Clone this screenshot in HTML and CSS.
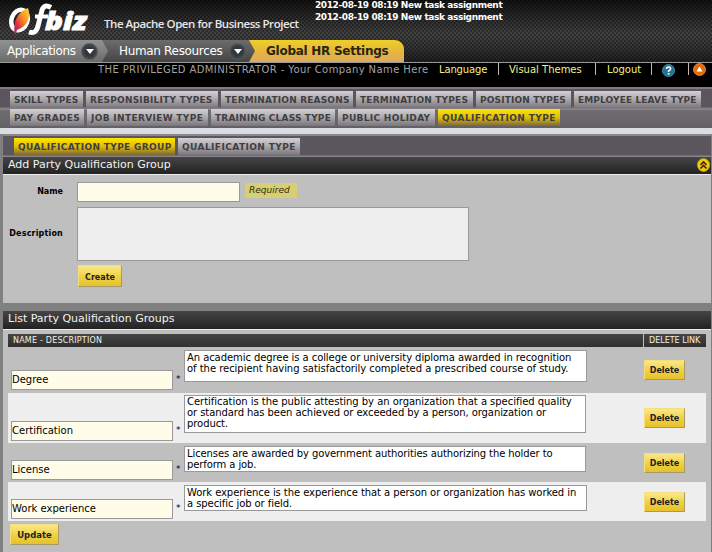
FILE: index.html
```html
<!DOCTYPE html>
<html lang="en">
<head>
<meta charset="utf-8">
<title>OFBiz: Global HR Settings</title>
<link rel="stylesheet" href="styles.css">
</head>
<body>
<header class="masthead">
  <div class="brand">
    <svg class="logo" width="84" height="38" viewBox="0 0 84 38">
      <defs><linearGradient id="feather" x1="1" y1="0" x2="0" y2="1"><stop offset="0" stop-color="#ffdc32"/><stop offset=".4" stop-color="#f88a24"/><stop offset=".7" stop-color="#dc3040"/><stop offset="1" stop-color="#8a2a80"/></linearGradient></defs>
      <ellipse cx="12.5" cy="20" rx="8" ry="10.5" transform="rotate(20 12.5 20)" fill="none" stroke="#fff" stroke-width="4.5"/>
      <path d="M8 36C6 25 8 13 21 8C24 17 21 26 10 30Z" fill="url(#feather)"/>
      <path d="M44 7.500C38 4 35.500 7 34.500 12L31 26Q29 34.500 22 32" fill="none" stroke="#fff" stroke-width="5"/>
      <path d="M28 16.500H41" stroke="#fff" stroke-width="4"/>
      <text class="logo-text" x="38" y="30" textLength="42" lengthAdjust="spacingAndGlyphs">biz</text>
    </svg>
    <span class="tagline">The Apache Open for Business Project</span>
    <div class="notices"><div>2012-08-19 08:19 New task assignment</div><div>2012-08-19 08:19 New task assignment</div></div>
  </div>
  <nav class="crumbs">
    <a class="crumb apps"><span>Applications</span><i class="drop"></i></a>
    <a class="crumb human"><span>Human Resources</span><i class="drop"></i></a>
    <a class="crumb current"><span>Global HR Settings</span></a>
  </nav>
</header>
<div class="userbar">
  <span class="who">THE PRIVILEGED ADMINISTRATOR - Your Company Name Here</span>
  <a class="lang">Language</a><a class="themes">Visual Themes</a><a class="logout">Logout</a>
  <span class="help"><svg width="13" height="13" viewBox="0 0 13 13"><circle cx="6.5" cy="6.5" r="6" fill="#247291" stroke="#468ca5"/><path d="M4.5 5Q4.6 3 6.6 3T8.6 4.8Q8.6 6 6.6 6.9V8" fill="none" stroke="#fff" stroke-width="1.6"/><path d="M5.8 9h1.7v1.6H5.8z" fill="#fff"/></svg></span>
  <span class="up"><svg width="13" height="13" viewBox="0 0 13 13"><circle cx="6.5" cy="6.5" r="6" fill="#e06c08" stroke="#d98238"/><path d="M6.5 3.5L9.5 8.5H3.5Z" fill="#fff"/></svg></span>
</div>
<nav class="tabs">
  <div class="tabrow first"><a class="t1">SKILL TYPES</a><a class="t2">RESPONSIBILITY TYPES</a><a class="t3">TERMINATION REASONS</a><a class="t4">TERMINATION TYPES</a><a class="t5">POSITION TYPES</a><a class="t6">EMPLOYEE LEAVE TYPE</a></div>
  <div class="tabrow second"><a class="t7">PAY GRADES</a><a class="t8">JOB INTERVIEW TYPE</a><a class="t9">TRAINING CLASS TYPE</a><a class="t10">PUBLIC HOLIDAY</a><a class="t11 on">QUALIFICATION TYPE</a></div>
</nav>
<main class="content">
  <div class="tabrow sub"><a class="t12 on">QUALIFICATION TYPE GROUP</a><a class="t13">QUALIFICATION TYPE</a></div>
  <section>
    <h2 class="title add"><span>Add Party Qualification Group</span>
      <svg width="13" height="14" viewBox="0 0 13 14"><ellipse cx="6.5" cy="7" rx="6.2" ry="6.5" fill="#f2c80e" stroke="#c69a18" stroke-width=".7"/><path d="M3.5 7L6.5 4L9.5 7M3.5 10.5L6.5 7.5L9.5 10.5" fill="none" stroke="#38270b" stroke-width="1.6"/></svg></h2>
    <form class="form">
      <label class="name">Name</label><div class="line"><div class="field short"></div><em class="required">Required</em></div>
      <label class="desc">Description</label><div class="area"></div>
      <span></span><a class="btn create">Create</a>
    </form>
  </section>
  <section class="list">
    <h2 class="title"><span>List Party Qualification Groups</span></h2>
    <div class="grid">
      <div class="head"><span class="h1">NAME - DESCRIPTION</span><span class="h2">DELETE LINK</span></div>
      <div class="row r1"><div class="field">Degree</div><b>*</b><div class="text"><p>An academic degree is a college or university diploma awarded in recognition</p><p class="l2">of the recipient having satisfactorily completed a prescribed course of study.</p></div><a class="btn">Delete</a></div>
      <div class="row r2 alt"><div class="field">Certification</div><b>*</b><div class="text"><p class="l2">Certification is the public attesting by an organization that a specified quality</p><p>or standard has been achieved or exceeded by a person, organization or</p><p>product.</p></div><a class="btn">Delete</a></div>
      <div class="row r3"><div class="field">License</div><b>*</b><div class="text"><p class="l5">Licenses are awarded by government authorities authorizing the holder to</p><p class="l5">perform a job.</p></div><a class="btn">Delete</a></div>
      <div class="row r4 alt"><div class="field">Work experience</div><b>*</b><div class="text"><p>Work experience is the experience that a person or organization has worked in</p><p>a specific job or field.</p></div><a class="btn">Delete</a></div>
    </div>
    <a class="btn update">Update</a>
  </section>
</main>
</body>
</html>
```
FILE: styles.css
```css
* { box-sizing: border-box; }
body { margin: 0; width: 712px; height: 552px; overflow: hidden; background: #808080; font-family: "DejaVu Sans", Verdana, sans-serif; font-size: 10px; color: #000; white-space: nowrap; }
h2, p { margin: 0; font-weight: normal; }

.masthead { height: 63px; border-bottom: 1px solid #999; background: radial-gradient(circle at 1px 1px, rgba(0,0,0,.3) 1px, transparent 1.3px) 0 0/4px 4px, radial-gradient(circle at 3px 3px, rgba(0,0,0,.3) 1px, transparent 1.3px) 0 0/4px 4px, linear-gradient(#111, #424242 34px, #363636 45px, #202020 62px); }
.brand { display: flex; height: 40px; }
.logo { margin-left: 7px; }
.logo-text { font: italic 800 24px "Open Sans", sans-serif; fill: #fff; stroke: #fff; stroke-width: .8px; }
.tagline { width: 196px; margin: 15px 0 0 13px; font: 600 11.5px/17px "Open Sans", sans-serif; color: #e8e8e8; letter-spacing: -.45px; }
.notices { margin: -1px 0 0 15px; font-weight: bold; font-size: 9px; line-height: 12px; color: #fff; letter-spacing: -.39px; }

.crumbs { display: flex; height: 22px; }
.crumb { display: flex; align-items: center; height: 22px; font-size: 12px; color: #fff; }
.apps { width: 108px; padding-left: 7px; justify-content: space-between; padding-right: 10px; background: linear-gradient(#929292, #6b6b6b); clip-path: polygon(0 0, 102px 0, 100% 50%, 102px 100%, 0 100%); z-index: 2; letter-spacing: -.4px; }
.human { width: 153px; margin-left: -6px; padding: 0 9px 0 17px; justify-content: space-between; background: linear-gradient(#6c6c6c, #444); clip-path: polygon(0 0, 147px 0, 100% 50%, 147px 100%, 0 100%); z-index: 1; letter-spacing: -.33px; }
.current { width: 156px; margin-left: -7px; padding-left: 18px; background: linear-gradient(#f0cf26, #e4b83c 50%, #dda95e); border-radius: 0 9px 0 0; color: #2a2410; font-weight: bold; font-size: 12px; letter-spacing: -.27px; }
.drop { width: 17px; height: 17px; border-radius: 50%; background: radial-gradient(#30353a 35%, #515961); border: 1px solid #555b60; display: flex; align-items: center; justify-content: center; }
.drop::before { content: ""; border: 4px solid transparent; border-top: 5px solid #fff; border-bottom: 0; }

.userbar { display: flex; height: 24px; background: #000; line-height: 13px; font-size: 10px; }
.who { width: 331px; margin-left: 98px; color: #a3a3a3; letter-spacing: .39px; }
.userbar a { color: #f2ef8b; height: 12px; border-right: 1px solid #bbb; }
.userbar .lang { width: 70px; padding-left: 10px; letter-spacing: -.15px; }
.themes { width: 97px; padding-left: 10px; }
.logout { width: 56px; padding-left: 11px; }
.help { width: 37px; height: 12px; border-right: 1px solid #bbb; padding: 1px 0 0 10px; }
.up { padding-left: 4px; }
.userbar svg { display: block; }

.tabs { height: 47px; background: #706d72; border-bottom: 6px solid #dbdbe2; }
.tabrow { display: flex; gap: 3px; padding-left: 10px; }
.tabrow a { height: 17px; padding: 1px 0 0 4px; line-height: 17px; font-weight: bold; font-size: 9px; color: #403e40; background: linear-gradient(#d3d1d4, #aaa7ab 50%, #79757b); }
.tabrow .on { background: linear-gradient(#ffe500, #dfbd08 50%, #7d6736); }
.first { height: 22px; padding-top: 4px; background: linear-gradient(#807b84 2px, #5b565e 2px, #5b565e 20px, #817d83 21px); }
.second { height: 19px; background: linear-gradient(#88858a 1px, #706d72 1px, #646166); }
.t1 { width: 73px; letter-spacing: .1px; }
.t2 { width: 132px; letter-spacing: .22px; }
.t3 { width: 132px; letter-spacing: .17px; }
.t4 { width: 117px; letter-spacing: .18px; }
.t5 { width: 95px; letter-spacing: .15px; }
.t6 { width: 127px; letter-spacing: .12px; }
.t7 { width: 74px; letter-spacing: .3px; }
.t8 { width: 121px; letter-spacing: .34px; }
.t9 { width: 124px; letter-spacing: .17px; }
.t10 { width: 97px; letter-spacing: .32px; }
.t11 { width: 122px; letter-spacing: .42px; }
.t12 { width: 161px; letter-spacing: .35px; }
.t13 { width: 122px; letter-spacing: .42px; }

.content { margin: 0 1px 0 3px; }
.sub { height: 23px; padding: 4px 0 0 11px; background: linear-gradient(#8c878f 2px, #5b575e 2px, #5b565e 21px, #89858c 22px); }
.title { display: flex; justify-content: space-between; height: 18px; padding: 0 1px 0 5px; border-bottom: 1px solid #eee; background: linear-gradient(#454545, #222); color: #f2f2f2; font-size: 11px; line-height: 15px; }
.title svg { margin-top: 1px; }
.form { display: grid; grid-template: 21px 54px 22px / 60px auto; justify-content: start; row-gap: 4px; column-gap: 14px; height: 128px; padding-top: 7px; background: #bfbfbf; }
.form label { text-align: right; font-weight: bold; font-size: 8px; line-height: 20px; }
.form .desc { line-height: 54px; letter-spacing: .18px; }
.line { display: flex; }
.field { width: 162px; height: 20px; background: #fffde9; border: 1px solid #999; }
.field.short { width: 163px; }
.required { width: 52px; height: 15px; margin: 1px 0 0 5px; padding-left: 4px; background: #d8cf72; font-size: 9px; line-height: 15px; color: #302c10; }
.area { width: 392px; height: 54px; background: #eee; border: 1px solid #999; }
.btn { display: block; width: 41px; height: 20px; background: linear-gradient(#f9e88a, #f0d247 50%, #e6c129); border: solid; border-width: 1px; border-color: #f3df7e #a99a62 #a4986d #f3df7e; font-weight: bold; font-size: 8px; line-height: 19px; text-align: center; color: #222; }
.create { width: 44px; height: 22px; margin-left: 1px; line-height: 23px; }
.list { height: 241px; margin-top: 8px; background: #bfbfbf; }
.list .title { height: 19px; }
.grid { margin: 4px 5px 0; }
.head { display: flex; height: 13px; gap: 1px; color: #f0f0e5; font-size: 8px; line-height: 14px; }
.head span { background: linear-gradient(#454545, #303030); padding-left: 5px; }
.h1 { width: 635px; letter-spacing: .2px; } .h2 { width: 62px; }
.row { display: flex; height: 39px; padding-left: 3px; }
.alt { background: #eee; }
.row .field { margin-top: 17px; padding-left: 0; line-height: 18px; }
.row b { width: 11px; padding: 18px 0 0 3px; font-size: 9px; font-weight: normal; line-height: 16px; }
.text { width: 402px; height: 26px; margin-top: 3px; padding: 1px 0 0 2px; background: #fff; border: 1px solid #999; line-height: 11px; letter-spacing: -.075px; }
.l2 { letter-spacing: -.035px; } .l5 { letter-spacing: -.1px; }
.row .btn { margin: 10px 0 0 58px; }
.r1 { height: 46px; } .r2 { height: 50px; }
.r1 .field { margin-top: 23px; } .r1 b { padding-top: 24px; } .r1 .text { width: 403px; height: 32px; } .r1 .btn { margin: 13px 0 0 57px; }
.r2 .field { margin-top: 28px; } .r2 b { padding-top: 29px; } .r2 .text { height: 38px; margin-top: 2px; padding-top: 0; } .r2 .btn { margin-top: 15px; }
.r4 .text { width: 403px; } .r4 .btn { margin-left: 57px; }
.row .field { text-indent: 0; }
.update { width: 49px; height: 21px; margin: 3px 0 0 7px; font-size: 8.5px; line-height: 20px; }
```
